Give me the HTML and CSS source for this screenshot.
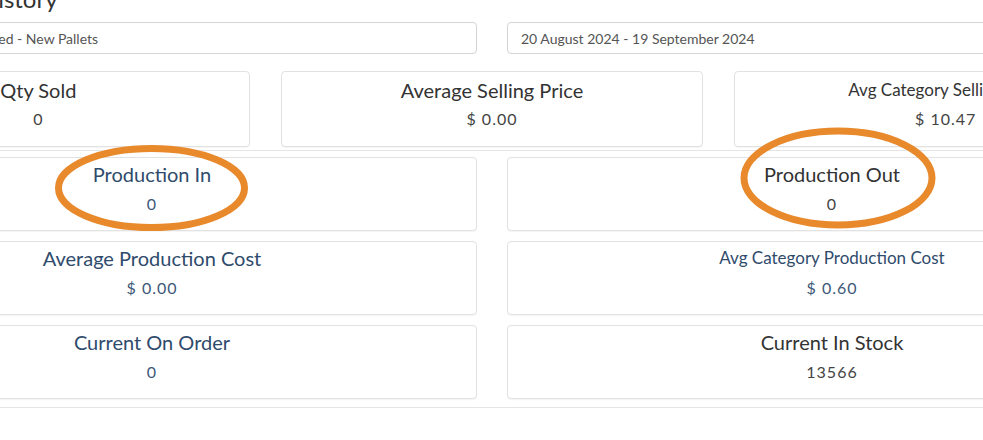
FILE: index.html
```html
<!DOCTYPE html>
<html lang="en">
<head>
  <meta charset="UTF-8" />
  <meta name="viewport" content="width=device-width, initial-scale=1.0"/>
  <title>Product History</title>
  <link rel="stylesheet" href="styles.css">
</head>
<body>
  <div class="page">
    <h2 class="page-title">History</h2>

    <div class="filters">
      <input type="text" class="form-control" value="Wood Pallets - Heat Treated - New Pallets" />
      <input type="text" class="form-control" value="20 August 2024 - 19 September 2024" />
    </div>

    <div class="stats-top">
      <div class="stat">
        <div class="stat-title">Qty Sold</div>
        <div class="stat-value">0</div>
      </div>
      <div class="stat">
        <div class="stat-title">Average Selling Price</div>
        <div class="stat-value">$ 0.00</div>
      </div>
      <div class="stat">
        <div class="stat-title small">Avg Category Selling Price</div>
        <div class="stat-value">$ 10.47</div>
      </div>
    </div>

    <hr class="divider">

    <div class="stats-grid">
      <div class="stat">
        <div class="stat-title link">Production In</div>
        <div class="stat-value link">0</div>
      </div>
      <div class="stat">
        <div class="stat-title">Production Out</div>
        <div class="stat-value">0</div>
      </div>
      <div class="stat">
        <div class="stat-title link">Average Production Cost</div>
        <div class="stat-value link">$ 0.00</div>
      </div>
      <div class="stat">
        <div class="stat-title link small">Avg Category Production Cost</div>
        <div class="stat-value link">$ 0.60</div>
      </div>
      <div class="stat">
        <div class="stat-title link">Current On Order</div>
        <div class="stat-value link">0</div>
      </div>
      <div class="stat">
        <div class="stat-title">Current In Stock</div>
        <div class="stat-value">13566</div>
      </div>
    </div>

    <hr class="divider bottom">
  </div>

  <!-- annotation marks drawn over the screenshot -->
  <svg class="marks" width="983" height="440" viewBox="0 0 983 440">
    <ellipse cx="151.5" cy="188" rx="93" ry="39.5" />
    <ellipse cx="838" cy="178" rx="94" ry="47" />
  </svg>
</body>
</html>
```

FILE: styles.css
```css
* {
  box-sizing: border-box;
}
body {
  margin: 0;
  font-family: Lato, "Open Sans", sans-serif;
  background: #fff;
  color: #333;
  overflow: hidden;
  position: relative;
}
.page {
  width: 1330px;
  margin-left: -173px;
}
.page-title {
  margin: -14px 0 10px 153px;
  font-size: 24px;
  line-height: 26px;
  font-weight: normal;
  color: #333;
}
.filters {
  display: grid;
  grid-template-columns: 1fr 1fr;
  gap: 30px;
}
.form-control {
  height: 32px;
  padding: 6px 13px;
  border: 1px solid #d4d4d4;
  border-radius: 4px;
  font-family: inherit;
  font-size: 14px;
  color: #555;
  background: #fff;
}
.stats-top {
  margin-top: 17px;
  display: grid;
  grid-template-columns: 1fr 1fr 1fr;
  gap: 31px;
}
.stats-top .stat {
  height: 76px;
}
.stats-top .stat-value {
  line-height: 31px;
}
.stat {
  height: 74px;
  padding-top: 5px;
  border: 1px solid #e2e2e2;
  border-radius: 4px;
  box-shadow: 0 1px 1px rgba(0, 0, 0, 0.04);
  text-align: center;
  background: #fff;
}
.stat-title {
  font-size: 20px;
  line-height: 26px;
  color: #333;
}
.stat-title.small {
  font-size: 17px;
}
.stat-value {
  font-size: 16px;
  line-height: 29px;
  letter-spacing: 1px;
  color: #444;
}
.link {
  color: #2f4b6c;
}
.stat-value.link {
  color: #3d5878;
}
.divider {
  margin: 3px 0 6px;
  border: 0;
  border-top: 1px solid #e5e5e5;
}
.stats-grid {
  display: grid;
  grid-template-columns: 1fr 1fr;
  column-gap: 30px;
  row-gap: 10px;
}
.stats-grid .stat {
  padding-top: 3px;
}
.stats-grid .stat-value {
  margin-top: 2px;
}
.divider.bottom {
  margin: 8px 0 0;
}
.marks {
  position: absolute;
  left: 0;
  top: 0;
  pointer-events: none;
}
.marks ellipse {
  fill: none;
  stroke: #e8892c;
  stroke-width: 7;
}
```
